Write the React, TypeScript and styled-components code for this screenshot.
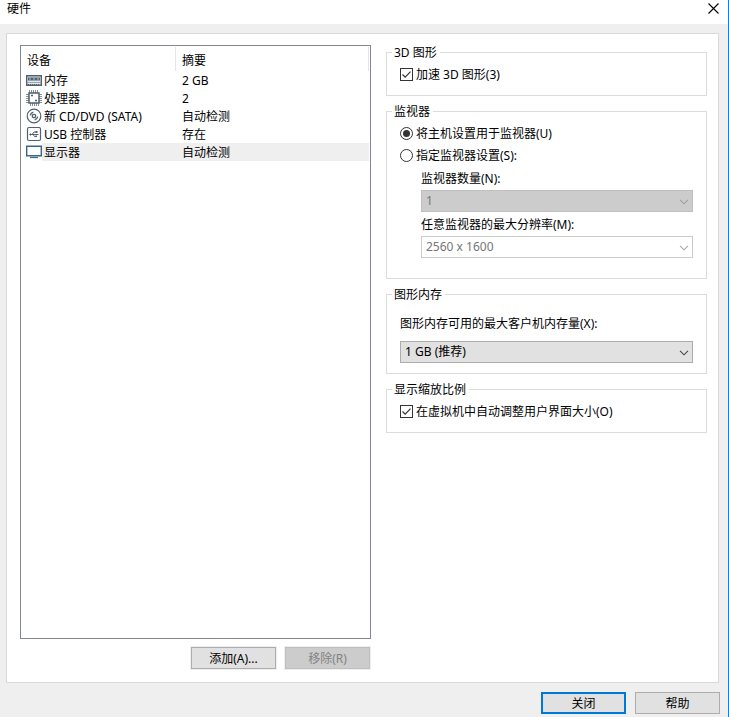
import React from "react";
import styled, { createGlobalStyle } from "styled-components";

const GlobalStyle = createGlobalStyle`
  *, *::before, *::after { box-sizing: border-box; }
  body {
    margin: 0;
    background: #efefef;
    color: #000;
    font-family: "Noto Sans", "Noto Sans CJK SC", sans-serif;
    font-size: 12px;
    line-height: 18px;
  }
  button, select, input { font: inherit; color: inherit; }
`;

const Dialog = styled.div`
  display: flex;
  flex-direction: column;
  min-height: 100vh;
  background: #efefef;
  border-right: 1px solid #0f7fdc;
`;

const TitleBar = styled.header`
  display: flex;
  align-items: flex-start;
  justify-content: space-between;
  height: 24px;
  padding: 0 7px;
  background: #fff;
`;

const Title = styled.h1`
  margin: 0;
  font-size: 12px;
  font-weight: 400;
  line-height: 18px;
`;

const CloseButton = styled.button`
  display: flex;
  align-items: center;
  justify-content: center;
  width: 15px;
  height: 17px;
  padding: 0;
  border: 0;
  background: transparent;
`;

const Panel = styled.main`
  flex: 1;
  display: flex;
  gap: 15px;
  margin: 9px 9px 0 6px;
  padding: 10px 11px 13px 13px;
  background: #fff;
  border: 1px solid #d9d9d9;
`;

const DeviceColumn = styled.section`
  flex: 351 1 0;
  min-width: 0;
  display: flex;
  flex-direction: column;
  gap: 8px;
  padding-top: 1px;
`;

const SettingsColumn = styled.section`
  flex: 321 1 0;
  min-width: 0;
  display: flex;
  flex-direction: column;
  gap: 7px;
`;

const DeviceList = styled.div`
  flex: 1;
  padding-right: 1px;
  border: 1px solid #828790;
`;

const DeviceTable = styled.table`
  width: 100%;
  table-layout: fixed;
  border-collapse: collapse;
  text-align: left;
`;

const IconCol = styled.col`
  width: 21px;
`;

const NameCol = styled.col`
  width: 134px;
`;

const HeaderCell = styled.th`
  height: 25px;
  padding: 4px 0 0 6px;
  font-weight: 400;
  line-height: 20px;
  background: linear-gradient(#e5e5e5, #e5e5e5) right 1px / 1px 24px no-repeat;
`;

const IconCell = styled.td`
  height: 18px;
  padding: 0 0 0 5px;
  line-height: 0;
`;

const Cell = styled.td<{ $selected?: boolean; $first?: boolean }>`
  height: 18px;
  padding: 2px 0 0 ${(p) => (p.$first ? 2 : 6)}px;
  line-height: 16px;
  white-space: nowrap;
  background: ${(p) => (p.$selected ? "#efefef" : "transparent")};
`;

const ButtonRow = styled.div`
  display: flex;
  justify-content: flex-end;
  gap: 9px;
  padding-right: 1px;
`;

const Footer = styled.footer`
  display: flex;
  justify-content: flex-end;
  gap: 9px;
  padding: 9px 8px 3px;
`;

const Button = styled.button<{ $primary?: boolean }>`
  width: 85px;
  height: 22px;
  padding: 2px 0 0;
  line-height: 16px;
  background: #e1e1e1;
  border: ${(p) => (p.$primary ? "2px solid #0078d7" : "1px solid #adadad")};
  box-shadow: 0 0 0 1px #efefef;
  &:disabled {
    color: #838383;
    background: #ccc;
    border-color: #bfbfbf;
  }
`;

const Group = styled.fieldset<{ $bottom?: number }>`
  min-width: 0;
  margin: 0;
  padding: 3px 13px ${(p) => p.$bottom ?? 10}px 13px;
  border: 1px solid #dcdcdc;
`;

const Legend = styled.legend`
  height: 17px;
  margin-left: -8px;
  padding: 0 3px 0 2px;
  line-height: 18px;
`;

const Choice = styled.label`
  display: flex;
  align-items: center;
  gap: 3px;
  height: 21px;
  line-height: 21px;
  white-space: nowrap;
  & + & { margin-top: 1px; }
`;

const Mark = styled.span`
  display: grid;
  width: 13px;
  height: 13px;
  & > * { grid-area: 1 / 1; }
  & > svg { pointer-events: none; }
`;

const Tick = styled.input`
  appearance: none;
  width: 13px;
  height: 13px;
  margin: 0;
  background: #fff;
  border: 1px solid #333;
  border-radius: ${(p) => (p.type === "radio" ? "50%" : "0")};
`;

const Nested = styled.div`
  padding-left: 21px;
`;

const Spaced = styled.div`
  padding-top: 5px;
`;

const FieldLabel = styled.label<{ $gap?: number }>`
  display: block;
  height: 24px;
  margin-bottom: ${(p) => p.$gap ?? 0}px;
  line-height: 26px;
  white-space: nowrap;
`;

const SelectBox = styled.div`
  display: grid;
  align-items: center;
  & > * { grid-area: 1 / 1; }
  & > svg {
    justify-self: end;
    margin: 2px 4px 0 0;
    pointer-events: none;
  }
`;

const Select = styled.select<{ $tone: "grey" | "light" | "active" }>`
  appearance: none;
  width: 100%;
  height: 22px;
  margin: 0;
  padding: 0 20px 0 4px;
  line-height: 20px;
  border: 1px solid ${(p) => (p.$tone === "active" ? "#adadad" : p.$tone === "grey" ? "#bfbfbf" : "#ccc")};
  border-radius: 0;
  background: ${(p) => (p.$tone === "active" ? "#e1e1e1" : p.$tone === "grey" ? "#ccc" : "#fff")};
  color: ${(p) => (p.$tone === "active" ? "#000" : "#767676")};
  opacity: 1;
`;

const ink = "#52616e";

const MemoryIcon = () => (
  <svg width="16" height="18" viewBox="0 0 16 18" fill="none" aria-hidden="true">
    <path d="M.7 4.700h14.600v9.600H.7z" stroke={ink} strokeWidth="1.400" fill="#e4eaee" />
    <path d="M2 6.500h12v3H2z" fill={ink} />
    <path d="M3 8h2M7 8h2M11 8h2" stroke="#b9c4cc" />
    <path d="M1 11.500h14" stroke="#9aa7b1" />
    <path d="M2 13.500h12" stroke={ink} strokeDasharray="1 1" />
  </svg>
);

const CpuIcon = () => (
  <svg width="16" height="18" viewBox="0 0 16 18" fill="none" stroke={ink} aria-hidden="true">
    <rect x="3" y="4" width="10" height="10" strokeWidth="1.500" />
    <path
      d="M3.500 1v3M5.500 1v3M7.500 1v3M9.500 1v3M11.500 1v3M4.500 14v3M6.500 14v3M8.500 14v3M10.500 14v3M12.500 14v3M0 5.500h3M0 7.500h3M0 9.500h3M0 11.500h3M0 13.500h3M13 5.500h3M13 7.500h3M13 9.500h3M13 11.500h3M13 13.500h3"
      opacity=".7"
    />
    <path d="M5 6.500h2M9 11.500h2" strokeWidth="1.300" />
  </svg>
);

const DiscIcon = () => (
  <svg width="16" height="18" viewBox="0 0 16 18" fill="none" stroke={ink} aria-hidden="true">
    <circle cx="8" cy="9" r="6.800" strokeWidth="1.200" />
    <circle cx="8" cy="9" r="1.700" strokeWidth="1.300" />
    <path d="M4.300 8.300a4 4 0 0 1 3-3M11.700 9.700a4 4 0 0 1-3 3" strokeWidth="1.400" />
  </svg>
);

const UsbIcon = () => (
  <svg width="16" height="18" viewBox="0 0 16 18" fill="none" stroke={ink} aria-hidden="true">
    <rect x="1.500" y="2.500" width="13" height="13" rx="1.500" strokeWidth="1.200" />
    <path d="M4 9.500h8.500M6 9.500l2-2.500h2M7 9.500l1.500 2H10" />
    <path d="M3 9.500l2-1.500v3zM9.500 6h2v2h-2zM9.500 10.500h1.500v1.500H9.500z" fill={ink} stroke="none" />
  </svg>
);

const DisplayIcon = () => (
  <svg width="16" height="18" viewBox="0 0 16 18" fill="none" aria-hidden="true">
    <path d="M.7 3.200h14.600v9.600H.7z" stroke="#3a6584" strokeWidth="1.400" fill="#fff" />
    <path d="M4 14.500h8" stroke="#3a6584" strokeWidth="1.200" />
  </svg>
);

const Check = () => (
  <svg width="13" height="13" viewBox="0 0 13 13" fill="none" aria-hidden="true">
    <path d="M2.500 6.500l2.700 2.700 5.300-5.500" stroke="#333" strokeWidth="1.200" />
  </svg>
);

const Dot = () => (
  <svg width="13" height="13" viewBox="0 0 13 13" aria-hidden="true">
    <circle cx="6.500" cy="6.500" r="3.500" fill="#333" />
  </svg>
);

const Chevron = ({ color }: { color: string }) => (
  <svg width="10" height="6" viewBox="0 0 10 6" fill="none" aria-hidden="true">
    <path d="M1 .8l4 4 4-4" stroke={color} strokeWidth="1.100" />
  </svg>
);

const devices = [
  { icon: <MemoryIcon />, name: "内存", summary: "2 GB" },
  { icon: <CpuIcon />, name: "处理器", summary: "2" },
  { icon: <DiscIcon />, name: "新 CD/DVD (SATA)", summary: "自动检测" },
  { icon: <UsbIcon />, name: "USB 控制器", summary: "存在" },
  { icon: <DisplayIcon />, name: "显示器", summary: "自动检测", selected: true },
];

export default function App() {
  const [accelerate, setAccelerate] = React.useState(true);
  const [scale, setScale] = React.useState(true);
  const [mode, setMode] = React.useState("host");

  return (
    <>
      <GlobalStyle />
      <Dialog>
        <TitleBar>
          <Title>硬件</Title>
          <CloseButton type="button" aria-label="关闭窗口">
            <svg width="11" height="11" viewBox="0 0 11 11" aria-hidden="true">
              <path d="M.5.5l10 10M10.500.5l-10 10" stroke="#000" strokeWidth="1.100" />
            </svg>
          </CloseButton>
        </TitleBar>

        <Panel>
          <DeviceColumn>
            <DeviceList>
              <DeviceTable>
                <colgroup>
                  <IconCol />
                  <NameCol />
                  <col />
                </colgroup>
                <thead>
                  <tr>
                    <HeaderCell colSpan={2}>设备</HeaderCell>
                    <HeaderCell>摘要</HeaderCell>
                  </tr>
                </thead>
                <tbody>
                  {devices.map((d) => (
                    <tr key={d.name}>
                      <IconCell>{d.icon}</IconCell>
                      <Cell $first $selected={d.selected}>{d.name}</Cell>
                      <Cell $selected={d.selected}>{d.summary}</Cell>
                    </tr>
                  ))}
                </tbody>
              </DeviceTable>
            </DeviceList>
            <ButtonRow>
              <Button type="button">添加(A)...</Button>
              <Button type="button" disabled>移除(R)</Button>
            </ButtonRow>
          </DeviceColumn>

          <SettingsColumn>
            <Group>
              <Legend>3D 图形</Legend>
              <Choice>
                <Mark>
                  <Tick type="checkbox" checked={accelerate} onChange={() => setAccelerate(!accelerate)} />
                  {accelerate && <Check />}
                </Mark>
                加速 3D 图形(3)
              </Choice>
            </Group>

            <Group $bottom={20}>
              <Legend>监视器</Legend>
              <Choice>
                <Mark>
                  <Tick type="radio" name="monitor" checked={mode === "host"} onChange={() => setMode("host")} />
                  {mode === "host" && <Dot />}
                </Mark>
                将主机设置用于监视器(U)
              </Choice>
              <Choice>
                <Mark>
                  <Tick type="radio" name="monitor" checked={mode === "custom"} onChange={() => setMode("custom")} />
                  {mode === "custom" && <Dot />}
                </Mark>
                指定监视器设置(S):
              </Choice>
              <Nested>
                <FieldLabel htmlFor="count">监视器数量(N):</FieldLabel>
                <SelectBox>
                  <Select id="count" $tone="grey" disabled={mode === "host"}>
                    <option>1</option>
                  </Select>
                  <Chevron color="#a0a0a0" />
                </SelectBox>
                <FieldLabel htmlFor="resolution">任意监视器的最大分辨率(M):</FieldLabel>
                <SelectBox>
                  <Select id="resolution" $tone="light" disabled={mode === "host"}>
                    <option>2560 x 1600</option>
                  </Select>
                  <Chevron color="#a8a8a8" />
                </SelectBox>
              </Nested>
            </Group>

            <Group>
              <Legend>图形内存</Legend>
              <Spaced>
                <FieldLabel htmlFor="memory" $gap={6}>图形内存可用的最大客户机内存量(X):</FieldLabel>
                <SelectBox>
                  <Select id="memory" $tone="active">
                    <option>1 GB (推荐)</option>
                  </Select>
                  <Chevron color="#444" />
                </SelectBox>
              </Spaced>
            </Group>

            <Group>
              <Legend>显示缩放比例</Legend>
              <Choice>
                <Mark>
                  <Tick type="checkbox" checked={scale} onChange={() => setScale(!scale)} />
                  {scale && <Check />}
                </Mark>
                在虚拟机中自动调整用户界面大小(O)
              </Choice>
            </Group>
          </SettingsColumn>
        </Panel>

        <Footer>
          <Button type="button" $primary>关闭</Button>
          <Button type="button">帮助</Button>
        </Footer>
      </Dialog>
    </>
  );
}
